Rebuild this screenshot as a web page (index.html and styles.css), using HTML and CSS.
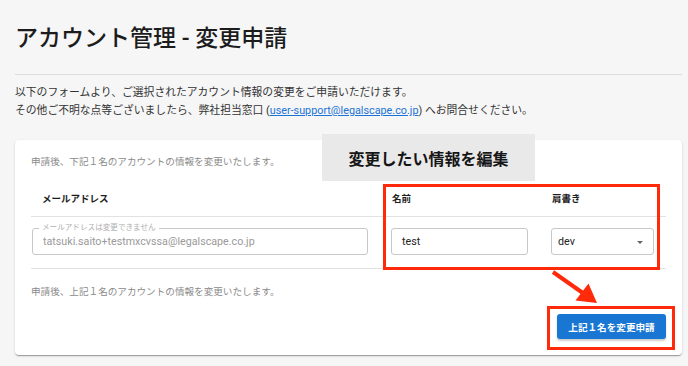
FILE: index.html
```html
<!DOCTYPE html>
<html lang="ja">
<head>
<meta charset="utf-8">
<title>アカウント管理 - 変更申請</title>
<link rel="stylesheet" href="styles.css">
</head>
<body>
<main class="page">
  <h1 class="title">アカウント管理 - 変更申請</h1>
  <hr class="rule">
  <p class="intro">以下のフォームより、ご選択されたアカウント情報の変更をご申請いただけます。<br>その他ご不明な点等ございましたら、弊社担当窓口 (<a class="link" href="#">user-support@legalscape.co.jp</a>) へお問合せください。</p>

  <section class="card">
    <p class="note">申請後、下記１名のアカウントの情報を変更いたします。</p>
    <div class="table">
      <div class="row head">
        <div class="cell cell-email"><span class="th th-email">メールアドレス</span></div>
        <div class="cell"><span class="th">名前</span></div>
        <div class="cell"><span class="th">肩書き</span></div>
      </div>
      <div class="row body">
        <div class="cell cell-email">
          <div class="field field-email">
            <span class="field-legend">メールアドレスは変更できません</span>
            <span class="field-value disabled">tatsuki.saito+testmxcvssa@legalscape.co.jp</span>
          </div>
        </div>
        <div class="cell">
          <div class="field field-name"><span class="field-value">test</span></div>
        </div>
        <div class="cell">
          <div class="field field-select"><span class="field-value">dev</span><span class="caret"></span></div>
        </div>
      </div>
    </div>
    <p class="note note-bottom">申請後、上記１名のアカウントの情報を変更いたします。</p>
    <div class="actions">
      <button class="btn" type="button">上記１名を変更申請</button>
    </div>

    <div class="callout">変更したい情報を編集</div>
    <div class="highlight highlight-fields"></div>
    <div class="highlight highlight-button"></div>
    <svg class="arrow" width="75" height="50" viewBox="0 0 75 50" aria-hidden="true">
      <line x1="8" y1="7" x2="40" y2="29.5" stroke="#ff2a0a" stroke-width="4" stroke-linecap="butt"/>
      <polygon points="52,38 30.5,35.5 43.5,18.5" fill="#ff2a0a"/>
    </svg>
  </section>
</main>
</body>
</html>
```

FILE: styles.css
```css
* { box-sizing: border-box; }

html, body {
  margin: 0;
  padding: 0;
  background: #f6f6f6;
}

body {
  font-family: Roboto, "Noto Sans CJK JP", sans-serif;
  color: #222;
  width: 688px;
  height: 366px;
  overflow: hidden;
}

.page {
  padding: 0 6px 0 15px;
}

.title {
  margin: 0;
  padding-top: 25px;
  font-size: 23px;
  line-height: 28px;
  font-weight: 500;
  color: #1c1c1c;
}

.rule {
  margin: 21px 0 0;
  border: 0;
  border-top: 1px solid #dcdcdc;
  height: 0;
}

.intro {
  margin: 9px 0 0;
  font-size: 10.8px;
  line-height: 18px;
  color: #333;
}

.link {
  color: #1a73d6;
  text-decoration: underline;
}

.card {
  position: relative;
  margin-top: 20px;
  background: #fff;
  border-radius: 4px;
  box-shadow: 0 2px 1px -1px rgba(0,0,0,.2), 0 1px 1px 0 rgba(0,0,0,.14), 0 1px 3px 0 rgba(0,0,0,.12);
  padding: 15px 16px 15px;
  height: 215px;
}

.note {
  margin: 0;
  font-size: 9.6px;
  line-height: 14px;
  color: #8a8a8a;
}

.note-bottom {
  margin-top: 16px;
}

.table {
  margin-top: 8px;
}

.row {
  display: grid;
  grid-template-columns: 360px 160px 115px;
  border-bottom: 1px solid #e2e2e2;
}

.row.head {
  height: 40px;
  align-items: center;
}

.row.body {
  padding: 11px 0 13px;
  align-items: center;
}

.th {
  font-size: 9.5px;
  font-weight: 700;
  color: #1e1e1e;
  padding-left: 1px;
}

.th-email {
  padding-left: 11px;
}

.field {
  position: relative;
  height: 27px;
  border: 1px solid #c8c8c8;
  border-radius: 3px;
  display: flex;
  align-items: center;
  padding-left: 10px;
  font-size: 10.7px;
  color: #222;
}

.field-email {
  margin-left: 1px;
  width: 336px;
}

.field-name {
  width: 137px;
}

.field-select {
  width: 103px;
  padding-left: 6px;
}

.field-value.disabled {
  color: #9a9a9a;
}

.field-legend {
  position: absolute;
  left: 6px;
  top: -6px;
  padding: 0 3px;
  background: #fff;
  font-size: 7.6px;
  line-height: 10px;
  color: #b0b0b0;
}

.caret {
  position: absolute;
  right: 10px;
  top: 12px;
  width: 0;
  height: 0;
  border-left: 3.5px solid transparent;
  border-right: 3.5px solid transparent;
  border-top: 3.5px solid #666;
}

.actions {
  display: flex;
  justify-content: flex-end;
  margin-top: 15px;
}

.btn {
  width: 109px;
  height: 25px;
  border: 0;
  border-radius: 3px;
  background: #1976d2;
  color: #fff;
  font-family: Roboto, "Noto Sans CJK JP", sans-serif;
  font-size: 9.6px;
  font-weight: 700;
  box-shadow: 0 2px 2px rgba(0,0,0,.2);
  padding: 0;
}

.callout {
  position: absolute;
  left: 307px;
  top: -6px;
  width: 213px;
  height: 47px;
  background: #e9e9e9;
  display: flex;
  align-items: center;
  justify-content: center;
  font-size: 16px;
  font-weight: 700;
  color: #161616;
}

.highlight {
  position: absolute;
  border: 3.5px solid #ff2a0a;
}

.highlight-fields {
  left: 368px;
  top: 44px;
  width: 277px;
  height: 86px;
}

.highlight-button {
  left: 532px;
  top: 166px;
  width: 128px;
  height: 44px;
}

.arrow {
  position: absolute;
  left: 530px;
  top: 125px;
}
```
